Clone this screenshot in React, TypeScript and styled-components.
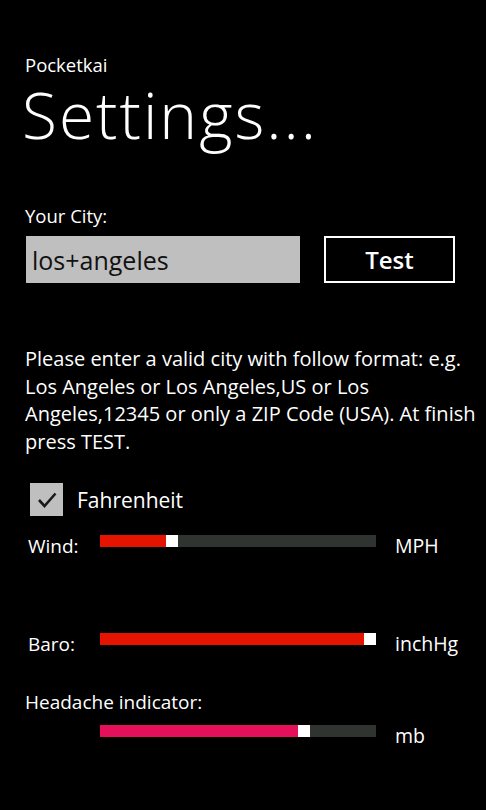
import React from "react";
import styled, { createGlobalStyle } from "styled-components";

const GlobalStyle = createGlobalStyle`
    html, body {
        margin: 0;
        padding: 0;
        background: #000000;
    }
    body {
        font-family: "Open Sans", "Noto Sans", sans-serif;
        color: #ffffff;
    }
`;

interface SliderProps {
    value: number;
    colour: string;
}

const Slider: React.FC<SliderProps> = ({ value, colour }) => {
    return (
        <Track>
            <Fill style={{ width: `${value}%`, background: colour }} />
            <Thumb />
        </Track>
    );
};

const App: React.FC = () => {
    return (
        <>
            <GlobalStyle />
            <Page>
                <AppName>Pocketkai</AppName>
                <PageTitle>Settings...</PageTitle>

                <Label $top={51}>Your City:</Label>
                <CityRow>
                    <CityInput defaultValue="los+angeles" />
                    <TestButton>Test</TestButton>
                </CityRow>

                <Help>
                    Please enter a valid city with follow format: e.g. Los
                    Angeles or Los Angeles,US or Los Angeles,12345 or only a ZIP
                    Code (USA). At finish press TEST.
                </Help>

                <CheckRow>
                    <CheckBox>
                        <svg width="20" height="18" viewBox="0 0 20 18">
                            <path
                                d="M2 9 L7.5 15 L18.5 2.5"
                                fill="none"
                                stroke="#1a1a1a"
                                strokeWidth="2.6"
                            />
                        </svg>
                    </CheckBox>
                    <CheckLabel>Fahrenheit</CheckLabel>
                </CheckRow>

                <SliderRow $gap={18}>
                    <RowLabel>Wind:</RowLabel>
                    <Slider value={24} colour="#e51400" />
                    <Unit>MPH</Unit>
                </SliderRow>

                <SliderRow $gap={74}>
                    <RowLabel>Baro:</RowLabel>
                    <Slider value={95.6} colour="#e51400" />
                    <Unit>inchHg</Unit>
                </SliderRow>

                <Label $top={34} $size={19}>
                    Headache indicator:
                </Label>
                <SliderRow $gap={10}>
                    <RowLabel />
                    <Slider value={71.7} colour="#e5105a" />
                    <Unit>mb</Unit>
                </SliderRow>
            </Page>
        </>
    );
};

const Page = styled.div`
    display: flex;
    flex-direction: column;
    width: 486px;
    height: 810px;
    padding: 53px 0 0 25px;
    box-sizing: border-box;
    overflow: hidden;
`;

const AppName = styled.div`
    font-size: 18.5px;
    line-height: 24px;
`;

const PageTitle = styled.h1`
    margin: 0 0 0 -3px;
    font-size: 64px;
    font-weight: 300;
    line-height: 76px;
    letter-spacing: 2px;
`;

const Label = styled.div<{ $top?: number; $size?: number }>`
    margin-top: ${(props) => props.$top ?? 36}px;
    font-size: ${(props) => props.$size ?? 18.5}px;
    line-height: 24px;
`;

const CityRow = styled.div`
    display: flex;
    align-items: center;
    gap: 24px;
    margin-top: 8px;
`;

const CityInput = styled.input`
    width: 274px;
    height: 47px;
    box-sizing: border-box;
    margin-left: 1px;
    padding: 0 6px;
    border: none;
    outline: none;
    background: #bfbfbf;
    color: #111111;
    font-family: "Open Sans", sans-serif;
    font-size: 25px;
`;

const TestButton = styled.button`
    width: 131px;
    height: 47px;
    box-sizing: border-box;
    border: 2px solid #ffffff;
    background: transparent;
    color: #ffffff;
    font-family: "Open Sans", sans-serif;
    font-size: 24px;
    font-weight: 600;
`;

const Help = styled.p`
    width: 452px;
    margin: 62px 0 0 0;
    font-size: 20px;
    line-height: 27.5px;
`;

const CheckRow = styled.div`
    display: flex;
    align-items: center;
    gap: 14px;
    margin: 28px 0 0 5px;
`;

const CheckBox = styled.div`
    display: flex;
    align-items: center;
    justify-content: center;
    width: 33px;
    height: 33px;
    background: #bfbfbf;
`;

const CheckLabel = styled.span`
    font-size: 21px;
    line-height: 28px;
`;

const SliderRow = styled.div<{ $gap?: number }>`
    display: grid;
    grid-template-columns: 75px 276px auto;
    align-items: start;
    margin-top: ${(props) => props.$gap ?? 18}px;
`;

const RowLabel = styled.span`
    margin-left: 3px;
    font-size: 19px;
    line-height: 24px;
`;

const Unit = styled.span`
    margin-left: 19px;
    font-size: 19.5px;
    line-height: 24px;
`;

const Track = styled.div`
    display: flex;
    height: 12px;
    margin-top: 1px;
    background: #303431;
`;

const Fill = styled.div`
    height: 100%;
`;

const Thumb = styled.div`
    width: 12px;
    height: 100%;
    background: #ffffff;
`;

export default App;
